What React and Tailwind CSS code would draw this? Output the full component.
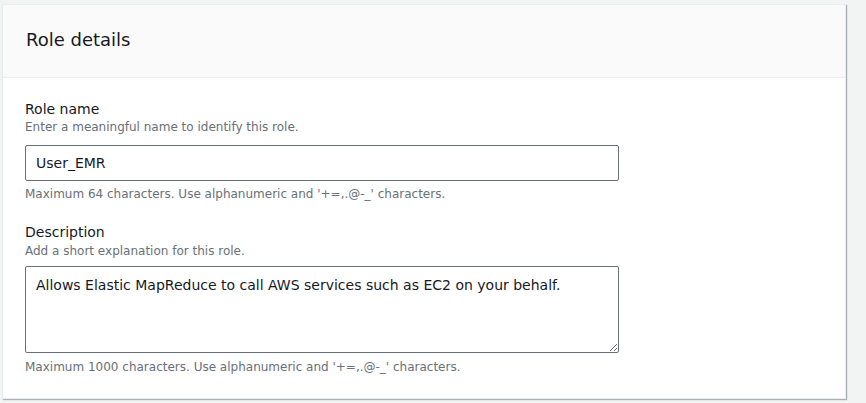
export default function App() {
  return (
    <div className="w-[866px] h-[403px] bg-[#f2f3f3] pt-[4px] pl-[2px]" style={{ fontFamily: '"DejaVu Sans", "Open Sans", Arial, sans-serif' }}>
      <div className="w-[844px] h-[395px] bg-white border border-[#eaeded] shadow-[1px_1px_1px_0_rgba(0,28,36,0.3)]">
        <div className="h-[73px] bg-[#fafafa] border-b border-[#eaeded] px-[23px] pb-[3px] flex items-center">
          <h2 className="text-[18px] text-[#16191f] leading-[24px]">Role details</h2>
        </div>
        <div className="px-[22px] pt-[21px]">
          <div className="text-[14px] leading-[20px] text-[#16191f]">Role name</div>
          <div className="text-[12px] leading-[16px] text-[#687078]">Enter a meaningful name to identify this role.</div>
          <div className="mt-[10px] w-[594px] h-[36px] border border-[#687078] rounded-[2px] px-[10px] flex items-center text-[14px] text-[#16191f]">User_EMR</div>
          <div className="mt-[5px] text-[12px] leading-[16px] text-[#687078]">Maximum 64 characters. Use alphanumeric and '+=,.@-_' characters.</div>
          <div className="mt-[20px] text-[14px] leading-[20px] text-[#16191f]">Description</div>
          <div className="mt-[1px] text-[12px] leading-[16px] text-[#687078]">Add a short explanation for this role.</div>
          <textarea
            className="mt-[7px] block w-[594px] h-[87px] border border-[#687078] rounded-[2px] px-[10px] pt-[8px] pb-[6px] text-[14px] leading-[20px] text-[#16191f] resize-y"
            defaultValue="Allows Elastic MapReduce to call AWS services such as EC2 on your behalf."
          />
          <div className="mt-[6px] text-[12px] leading-[16px] text-[#687078]">Maximum 1000 characters. Use alphanumeric and '+=,.@-_' characters.</div>
        </div>
      </div>
    </div>
  );
}
